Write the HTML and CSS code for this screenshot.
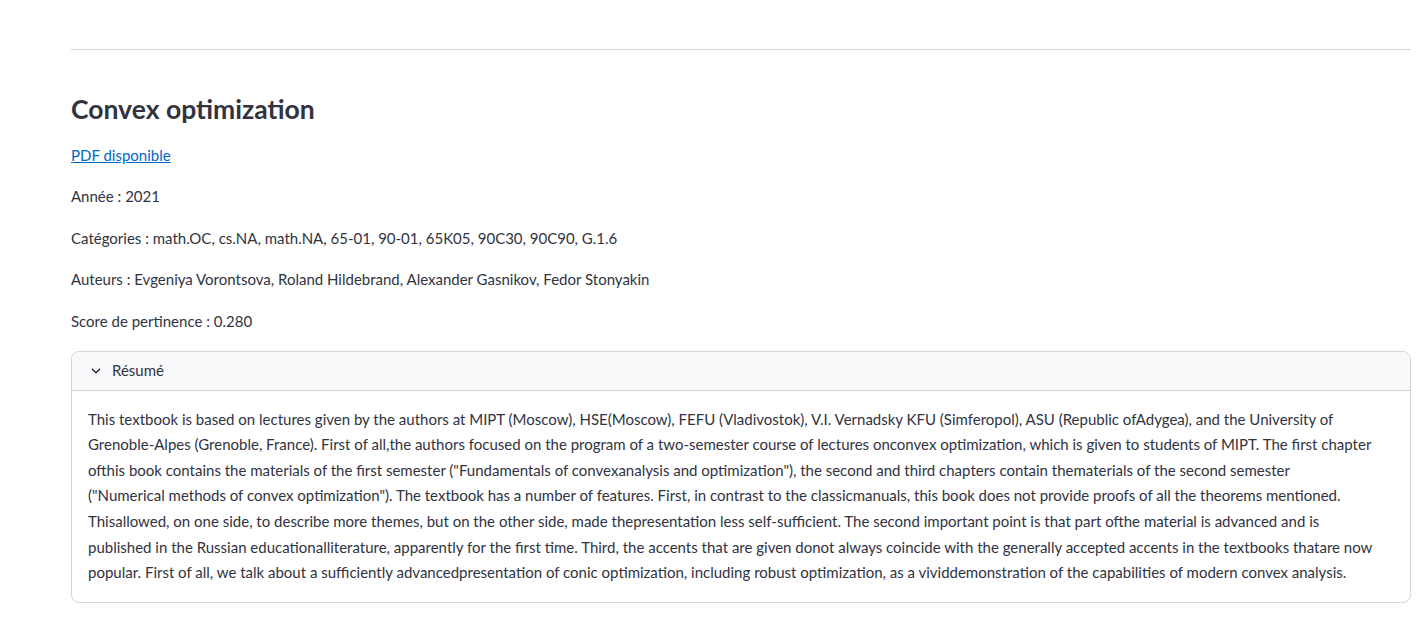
FILE: index.html
```html
<!DOCTYPE html>
<html lang="fr">
<head>
<meta charset="utf-8">
<title>Convex optimization</title>
<link rel="stylesheet" href="styles.css">
</head>
<body>
<main class="page">
  <hr class="rule">
  <h3 class="title">Convex optimization</h3>
  <div class="stack">
    <p class="line"><a class="link" href="#">PDF disponible</a></p>
    <p class="line">Année : 2021</p>
    <p class="line">Catégories : math.OC, cs.NA, math.NA, 65-01, 90-01, 65K05, 90C30, 90C90, G.1.6</p>
    <p class="line">Auteurs : Evgeniya Vorontsova, Roland Hildebrand, Alexander Gasnikov, Fedor Stonyakin</p>
    <p class="line">Score de pertinence : 0.280</p>
    <details class="expander" open>
      <summary class="exp-head">
        <svg class="chev" width="16" height="16" viewBox="0 0 16 16" aria-hidden="true"><path d="M4.5 6.2 L8 9.7 L11.5 6.2" fill="none" stroke="#31333f" stroke-width="1.6" stroke-linecap="round" stroke-linejoin="round"/></svg>
        <span>Résumé</span>
      </summary>
      <div class="exp-body">
        <p class="abstract">This textbook is based on lectures given by the authors at MIPT (Moscow), HSE(Moscow), FEFU (Vladivostok), V.I. Vernadsky KFU (Simferopol), ASU (Republic ofAdygea), and the University of<br>Grenoble-Alpes (Grenoble, France). First of all,the authors focused on the program of a two-semester course of lectures onconvex optimization, which is given to students of MIPT. The first chapter<br>ofthis book contains the materials of the first semester ("Fundamentals of convexanalysis and optimization"), the second and third chapters contain thematerials of the second semester<br>("Numerical methods of convex optimization"). The textbook has a number of features. First, in contrast to the classicmanuals, this book does not provide proofs of all the theorems mentioned.<br>Thisallowed, on one side, to describe more themes, but on the other side, made thepresentation less self-sufficient. The second important point is that part ofthe material is advanced and is<br>published in the Russian educationalliterature, apparently for the first time. Third, the accents that are given donot always coincide with the generally accepted accents in the textbooks thatare now<br>popular. First of all, we talk about a sufficiently advancedpresentation of conic optimization, including robust optimization, as a vividdemonstration of the capabilities of modern convex analysis.</p>
      </div>
    </details>
  </div>
</main>
</body>
</html>
```
FILE: styles.css
```css
html, body {
  margin: 0;
  padding: 0;
  background: #ffffff;
}
body {
  font-family: "Lato", "Liberation Sans", sans-serif;
  color: #31333f;
  font-size: 15px;
}
.page {
  padding: 49px 15px 40px 71px;
}
.rule {
  margin: 0;
  border: 0;
  height: 1px;
  background: rgba(49, 51, 63, 0.2);
}
.title {
  margin: 43px 0 16px 0;
  font-size: 26.5px;
  font-weight: 700;
  line-height: 33.6px;
  color: #31333f;
}
.stack {
  display: flex;
  flex-direction: column;
  gap: 16px;
}
.line {
  margin: 0;
  line-height: 25.6px;
}
.link {
  color: #0068c9;
  text-decoration: underline;
}
.expander {
  border: 1px solid rgba(49, 51, 63, 0.2);
  border-radius: 8px;
  overflow: hidden;
}
.exp-head {
  list-style: none;
  display: flex;
  align-items: center;
  gap: 8px;
  height: 38px;
  padding: 0 16px;
  background: #f8f9fb;
  border-bottom: 1px solid rgba(49, 51, 63, 0.2);
  cursor: pointer;
  line-height: 25.6px;
}
.exp-head::-webkit-details-marker { display: none; }
.chev { flex: none; }
.exp-body {
  padding: 16px;
}
.abstract {
  margin: 0;
  line-height: 25.6px;
  white-space: nowrap;
}
```
